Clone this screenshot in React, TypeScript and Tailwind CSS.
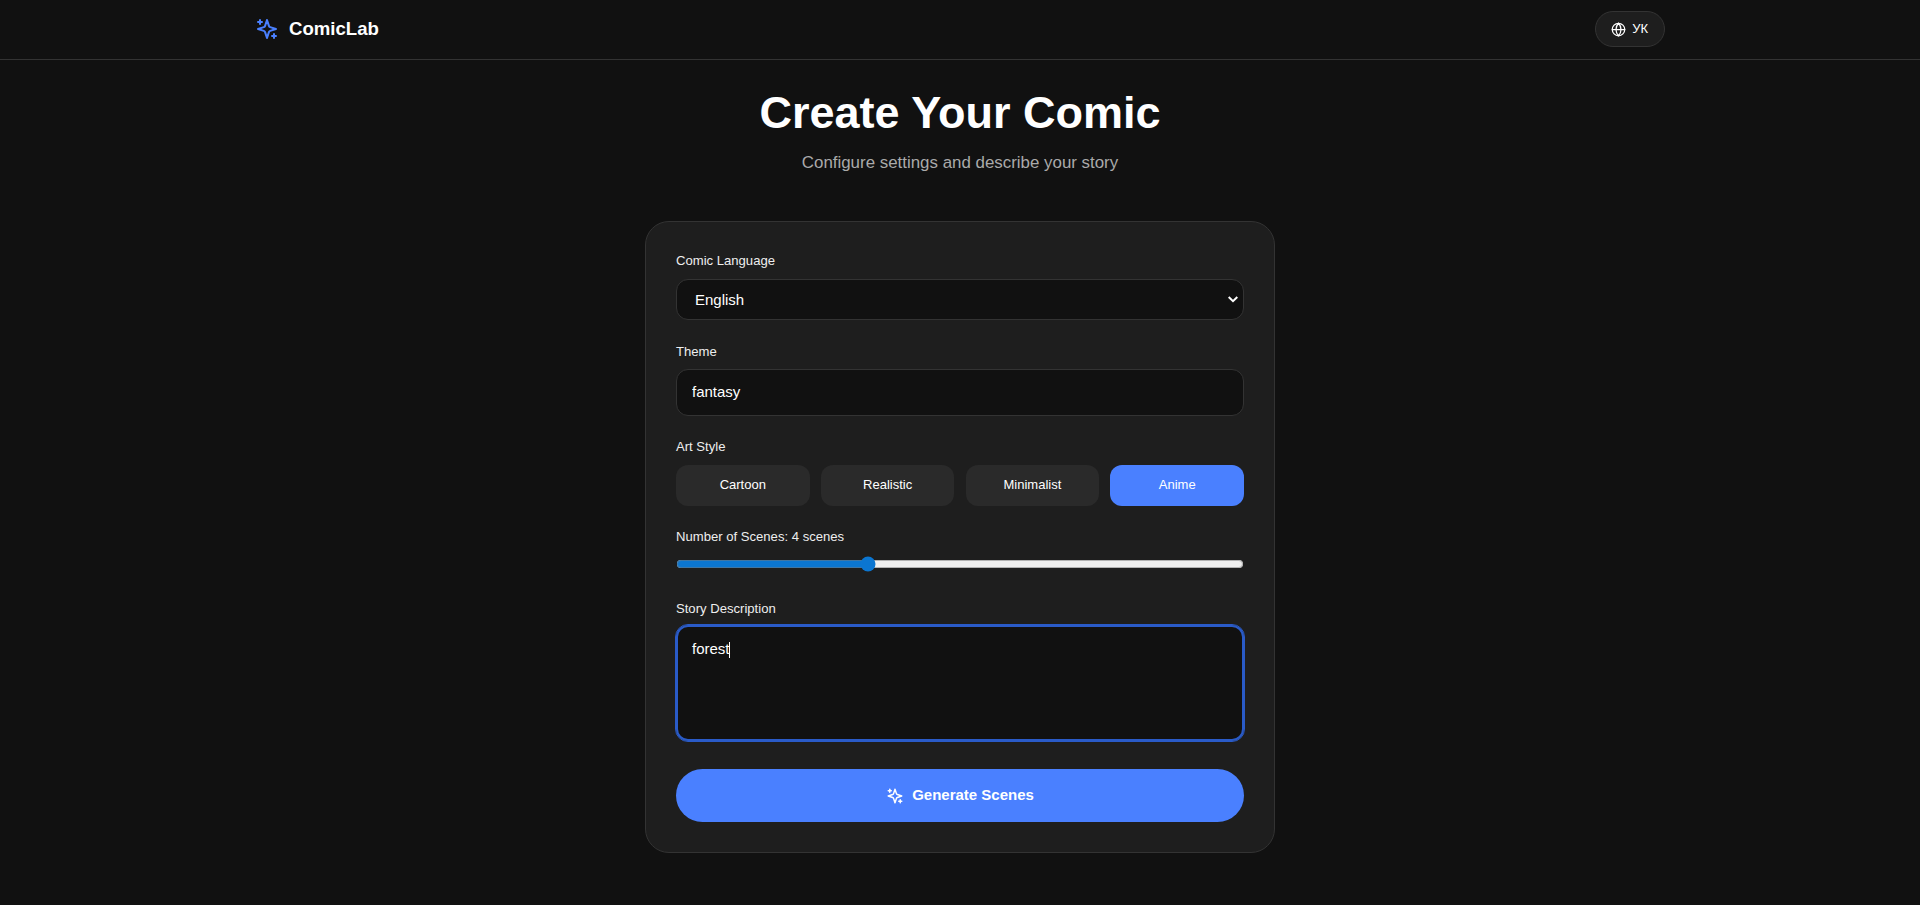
import { Globe } from "lucide-react";

const styles = ["Cartoon", "Realistic", "Minimalist", "Anime"];

function OldSparkles({ className }: { className: string }) {
  return (
    <svg className={className} viewBox="0 0 24 24" fill="none" stroke="currentColor" strokeWidth={2} strokeLinecap="round" strokeLinejoin="round">
      <path d="m12 3-1.912 5.813a2 2 0 0 1-1.275 1.275L3 12l5.813 1.912a2 2 0 0 1 1.275 1.275L12 21l1.912-5.813a2 2 0 0 1 1.275-1.275L21 12l-5.813-1.912a2 2 0 0 1-1.275-1.275L12 3Z" />
      <path d="M5 3v4" />
      <path d="M19 17v4" />
      <path d="M3 5h4" />
      <path d="M17 19h4" />
    </svg>
  );
}

export default function App() {
  return (
    <div className="min-h-[905px] bg-[#111111] text-white font-['Liberation_Sans',Arial,sans-serif]">
      <header className="h-[60px] border-b border-[#333333]">
        <div className="max-w-[1410px] mx-auto h-full flex items-center justify-between">
          <div className="flex items-center gap-[10px] pb-[2px]">
            <OldSparkles className="w-6 h-6 text-[#4a80ff]" />
            <span className="text-[18.6px] font-bold leading-7">ComicLab</span>
          </div>
          <button className="flex items-center gap-[6px] h-[36px] pl-[15px] pr-4 rounded-full bg-[#1e1e1e] border border-[#333333] text-[13px] text-white mb-[1px]">
            <Globe className="w-[15px] h-[15px]" />
            <span>УК</span>
          </button>
        </div>
      </header>
      <main className="flex flex-col items-center">
        <h1 className="mt-[27px] text-[45px] leading-[52px] font-bold">Create Your Comic</h1>
        <p className="mt-[11px] text-[16.9px] leading-[26px] text-[#aaaaaa]">Configure settings and describe your story</p>
        <form className="mt-[45px] w-[630px] h-[632px] bg-[#1e1e1e] border border-[#333333] rounded-3xl px-[30px] pt-[31px]">
          <label className="block text-[13.1px] leading-4 font-medium text-[#eeeeee] mb-[10px]">Comic Language</label>
          <div className="relative">
            <select className="block w-full h-[41px] rounded-xl bg-[#111111] border border-[#333333] pl-[18px] pt-[1px] text-[15px] text-white outline-none appearance-none" defaultValue="English">
              <option>English</option>
            </select>
            <svg className="absolute left-[552px] top-[17px] w-[10px] h-[7px] text-white" viewBox="0 0 10 7" fill="none" stroke="currentColor" strokeWidth={2}>
              <path d="M0.7 1 5 5.2 9.3 1" />
            </svg>
          </div>
          <div className="mt-[24px]">
            <label className="block text-[13.1px] leading-4 font-medium text-[#eeeeee] mb-[9px]">Theme</label>
            <input className="block w-full h-[47px] rounded-xl bg-[#111111] border border-[#333333] px-[15px] pb-[2px] text-[15px] text-white outline-none" defaultValue="fantasy" />
          </div>
          <div className="mt-[23px]">
            <label className="block text-[13.1px] leading-4 font-medium text-[#eeeeee] mb-[10px]">Art Style</label>
            <div className="grid grid-cols-4 gap-[11.2px]">
              {styles.map((s) => (
                <button type="button" key={s} className={`h-[41px] pb-[2px] rounded-xl text-[13px] font-medium text-white ${s === "Anime" ? "bg-[#4a80ff]" : "bg-[#2a2a2a]"}`}>
                  {s}
                </button>
              ))}
            </div>
          </div>
          <div className="mt-[23px]">
            <label className="block text-[13.1px] leading-4 font-medium text-[#eeeeee] mb-[11px]">Number of Scenes: 4 scenes</label>
            <input type="range" min={1} max={10} defaultValue={4} className="block w-full h-4 m-0 accent-[#0b76d1]" />
          </div>
          <div className="mt-[29px]">
            <label className="block text-[13.1px] leading-4 font-medium text-[#eeeeee] mb-[8px]">Story Description</label>
            <div className="relative">
              <textarea className="block w-full h-[116px] rounded-xl bg-[#111111] border-2 border-[#2a5bc8] outline-1 outline-[#2a5bc8] px-[14px] py-[11px] text-[15px] text-white resize-none" defaultValue="forest" />
              <span className="absolute left-[53px] top-[17px] w-px h-[16px] bg-white" />
            </div>
          </div>
          <button type="button" className="mt-[28px] w-full h-[53px] rounded-full bg-[#4a80ff] flex items-center justify-center gap-2 text-[15px] font-bold text-white">
            <OldSparkles className="w-[18px] h-[18px]" />
            Generate Scenes
          </button>
        </form>
      </main>
    </div>
  );
}
